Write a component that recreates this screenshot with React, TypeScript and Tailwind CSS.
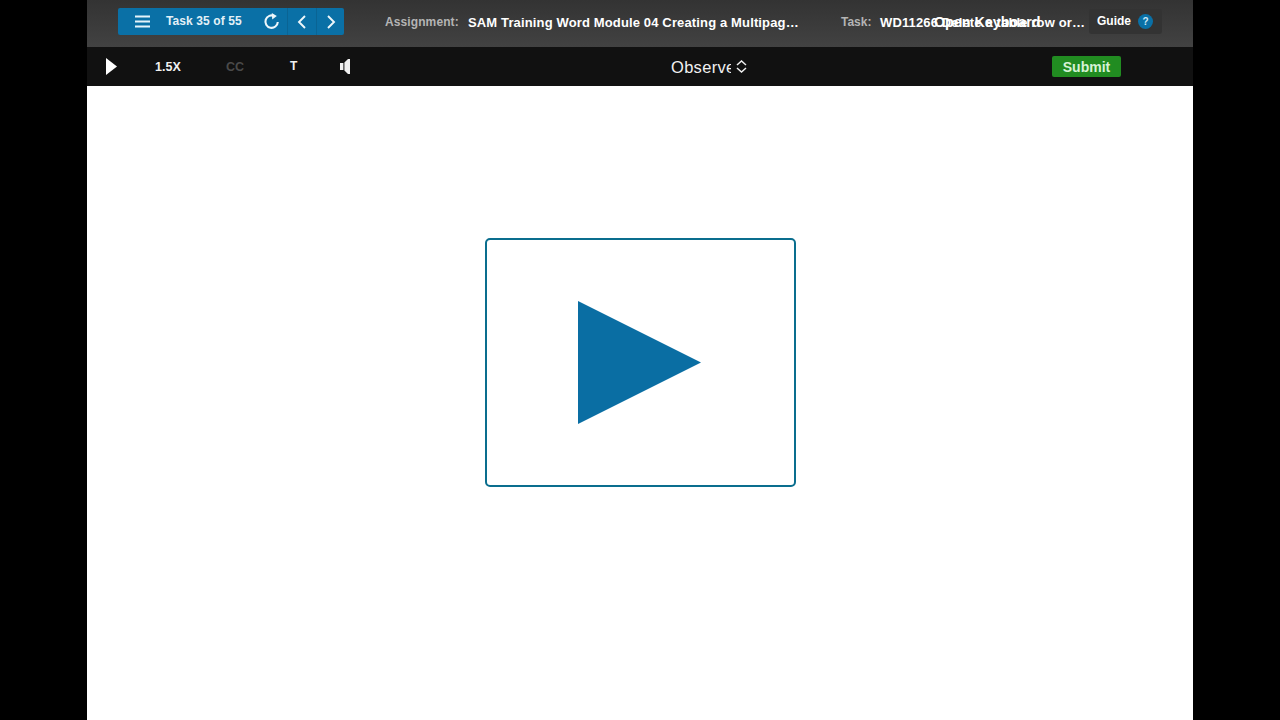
export default function App() {
  const font = { fontFamily: '"Liberation Sans", Arial, sans-serif' };
  return (
    <div className="flex h-[720px] w-[1280px] justify-center overflow-hidden bg-black" style={font}>
      <div className="flex w-[1106px] flex-col bg-white">
        <div className="relative flex h-[47px] items-center bg-gradient-to-b from-[#333333] to-[#424242] pb-[4px] pl-[31px]">
          <div className="flex h-[27px] w-[226px] items-center rounded-[2px] bg-[#0a70a6] text-white">
            <div className="flex w-[48px] justify-center">
              <svg width="15" height="13" viewBox="0 0 15 13" stroke="#e6f3fa" strokeWidth="2">
                <path d="M0 1.5h15M0 6.5h15M0 11.5h15" />
              </svg>
            </div>
            <span className="mb-[1px] w-[92px] text-[12px] font-bold leading-none tracking-[0.1px] text-[#e3f0f7]">Task 35 of 55</span>
            <div className="flex h-full w-[30px] items-center justify-center border-r border-[#0a6494] pr-[2px]">
              <svg width="17" height="17" viewBox="0 0 17 17" fill="none" stroke="#eef7fb" strokeWidth="2.1">
                <path d="M11.4 3.1A6.2 6.2 0 1 0 14.8 9" />
                <path d="M8.8 0l5 3-4.6 3.6z" fill="#eef7fb" stroke="none" />
              </svg>
            </div>
            <div className="flex h-full w-[29px] items-center justify-center border-r border-[#0a6494] pr-[1px]">
              <svg width="10" height="14" viewBox="0 0 10 14" fill="none" stroke="#eef7fb" strokeWidth="1.9">
                <path d="M8 1L2 7l6 6" />
              </svg>
            </div>
            <div className="flex h-full w-[27px] items-center justify-center pl-[1px]">
              <svg width="10" height="14" viewBox="0 0 10 14" fill="none" stroke="#eef7fb" strokeWidth="1.9">
                <path d="M2 1l6 6-6 6" />
              </svg>
            </div>
          </div>
          <span className="ml-[41px] w-[83px] text-[12px] font-bold tracking-[0.1px] text-[#b4b4b4]">Assignment:</span>
          <span className="mt-[2px] w-[373px] text-[13px] font-bold tracking-[0.14px] text-white">SAM Training Word Module 04 Creating a Multipag…</span>
          <span className="w-[39px] text-[12px] font-bold text-[#b4b4b4]">Task:</span>
          <span className="mt-[2px] w-[209px] whitespace-nowrap text-[13px] font-bold tracking-[0.14px] text-white">WD11266 Delete a table row or…</span>
          <div className="flex h-[25px] w-[73px] items-center rounded-[3px] bg-[#333333] pl-[8px]">
            <span className="mb-[1px] text-[12px] font-bold leading-none text-white">Guide</span>
            <span className="mb-[1px] ml-[7px] flex h-[15px] w-[15px] items-center justify-center rounded-full bg-[#0a70a6] text-[10px] font-bold text-[#cfe8f5]">?</span>
          </div>
          <span className="absolute left-[847px] top-[15px] text-[14.3px] font-bold leading-none text-white">Open Keyboard</span>
        </div>
        <div className="flex h-[39px] items-center bg-[#111111] pl-[19px]">
          <svg width="11" height="17" viewBox="0 0 11 17" fill="#ffffff">
            <path d="M0 0l11 8.5L0 17z" />
          </svg>
          <span className="ml-[38px] mt-[1px] w-[71px] text-[12.5px] font-bold text-[#f0f0f0]">1.5X</span>
          <span className="mt-[1px] w-[64px] text-[12.5px] font-bold text-[#4a4a4a]">CC</span>
          <span className="mb-[1px] w-[50px] text-[12px] font-bold text-[#f0f0f0]">T</span>
          <svg width="10" height="15" viewBox="0 0 10 15" fill="#f0f0f0">
            <path d="M0 4h3.4v7H0zM4.4 3.5L8 0h2v15H8l-3.6-3.5z" />
          </svg>
          <div className="ml-[321px] flex items-center">
            <span className="mt-[2px] w-[60px] overflow-hidden whitespace-nowrap text-[16.5px] leading-none tracking-[0.3px] text-[#f0f0f0]">Observe</span>
            <svg className="ml-[5px]" width="11" height="13" viewBox="0 0 11 13" fill="none" stroke="#f0f0f0" strokeWidth="1.5">
              <path d="M1 5l4.5-4L10 5M1 8l4.5 4L10 8" />
            </svg>
          </div>
          <button className="ml-[305px] h-[21px] w-[69px] rounded-[2px] bg-[#218c21] text-[14px] font-bold leading-none text-[#d5f2d5]">Submit</button>
        </div>
        <div className="flex flex-1 items-center justify-center pb-[81px]">
          <div className="flex h-[249px] w-[311px] items-center justify-center rounded-[5px] border-2 border-[#0a6e8e] bg-white">
            <svg className="mr-[1px]" width="123" height="123" viewBox="0 0 123 123" fill="#0a6ea3">
              <path d="M0 0l123 61.5L0 123z" />
            </svg>
          </div>
        </div>
      </div>
    </div>
  );
}
